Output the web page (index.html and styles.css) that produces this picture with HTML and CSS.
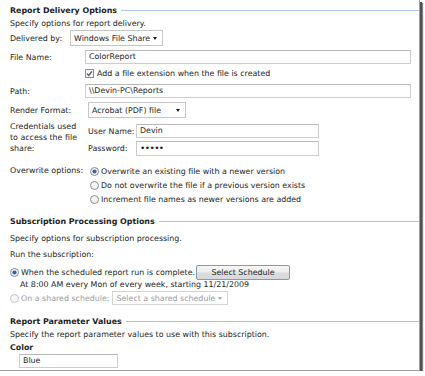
FILE: index.html
```html
<!DOCTYPE html>
<html lang="en">
<head>
    <meta charset="UTF-8">
    <title>Subscription Options</title>
    <link rel="stylesheet" href="styles.css">
</head>
<body>
    <div class="frame">
        <div class="heading first"><span>Report Delivery Options</span><span class="rule"></span></div>
        <p class="line desc-delivery">Specify options for report delivery.</p>

        <div class="row row-delivered">
            <span class="label w-delivered">Delivered by:</span>
            <div class="select select-share"><span>Windows File Share</span><span class="arrow"></span></div>
        </div>

        <div class="row row-field row-file">
            <span class="label w-field">File Name:</span>
            <div class="input input-path">ColorReport</div>
        </div>

        <div class="row row-check">
            <span class="label w-field"></span>
            <span class="checkbox">
                <svg width="9" height="9" viewBox="0 0 9 9"><rect x="0.5" y="0.5" width="8" height="8" fill="#f2f2f2" stroke="#8e8f8f"/><path d="M2 4.6 L3.7 6.4 L7 2.3" fill="none" stroke="#4b5a70" stroke-width="1.3"/></svg>
            </span>
            <span>Add a file extension when the file is created</span>
        </div>

        <div class="row row-field row-path">
            <span class="label w-field">Path:</span>
            <div class="input input-path">\\Devin-PC\Reports</div>
        </div>

        <div class="row row-render">
            <span class="label w-wide">Render Format:</span>
            <div class="select select-render"><span>Acrobat (PDF) file</span><span class="arrow"></span></div>
        </div>

        <div class="row row-cred">
            <span class="label w-wide cred-label"><span class="cred-text">Credentials used to access the file share:</span></span>
            <div class="cred-fields">
                <div class="cred-row">
                    <span class="cred-name">User Name:</span>
                    <div class="input input-cred">Devin</div>
                </div>
                <div class="cred-row">
                    <span class="cred-name">Password:</span>
                    <div class="input input-cred dots">&#8226;&#8226;&#8226;&#8226;&#8226;</div>
                </div>
            </div>
        </div>

        <div class="row row-overwrite">
            <span class="label w-over">Overwrite options:</span>
            <div class="options">
                <div class="option">
                    <svg class="radio" width="9" height="9" viewBox="0 0 9 9"><circle cx="4.5" cy="4.5" r="4" fill="#f4f4f4" stroke="#8c8c8c"/><circle cx="4.5" cy="4.5" r="2.1" fill="#2f64a8"/></svg>
                    <span>Overwrite an existing file with a newer version</span>
                </div>
                <div class="option">
                    <svg class="radio" width="9" height="9" viewBox="0 0 9 9"><circle cx="4.5" cy="4.5" r="4" fill="#f4f4f4" stroke="#8c8c8c"/></svg>
                    <span>Do not overwrite the file if a previous version exists</span>
                </div>
                <div class="option">
                    <svg class="radio" width="9" height="9" viewBox="0 0 9 9"><circle cx="4.5" cy="4.5" r="4" fill="#f4f4f4" stroke="#8c8c8c"/></svg>
                    <span>Increment file names as newer versions are added</span>
                </div>
            </div>
        </div>

        <div class="heading second"><span>Subscription Processing Options</span><span class="rule"></span></div>
        <p class="line desc-processing">Specify options for subscription processing.</p>
        <p class="line run-label">Run the subscription:</p>

        <div class="row row-when">
            <svg class="radio" width="9" height="9" viewBox="0 0 9 9"><circle cx="4.5" cy="4.5" r="4" fill="#f4f4f4" stroke="#8c8c8c"/><circle cx="4.5" cy="4.5" r="2.1" fill="#2f64a8"/></svg>
            <span>When the scheduled report run is complete.</span>
            <button type="button" class="btn">Select Schedule</button>
        </div>
        <p class="line schedule-info">At 8:00 AM every Mon of every week, starting 11/21/2009</p>

        <div class="row row-shared disabled">
            <svg class="radio" width="9" height="9" viewBox="0 0 9 9"><circle cx="4.5" cy="4.5" r="4" fill="#f7f7f7" stroke="#c4c4c4"/></svg>
            <span>On a shared schedule:</span>
            <div class="select select-shared"><span>Select a shared schedule</span><span class="arrow"></span></div>
        </div>

        <div class="heading third"><span>Report Parameter Values</span><span class="rule"></span></div>
        <p class="line desc-params">Specify the report parameter values to use with this subscription.</p>
        <p class="line param-name">Color</p>
        <div class="input input-param">Blue</div>
    </div>
</body>
</html>
```

FILE: styles.css
```css
body {
    margin: 0;
    background: #fff;
    font-family: "DejaVu Sans", Verdana, sans-serif;
    font-size: 7.9px;
    color: #252525;
}
.frame {
    width: 409px;
    height: 370px;
    padding-left: 10px;
    background: #fff;
    border-right: 1px solid #a0a0a0;
    border-bottom: 1px solid #a0a0a0;
    box-shadow: 2px 2px 0 #4f4f4f, 3px 3px 1px #808080;
    overflow: hidden;
}
.heading {
    display: flex;
    align-items: center;
    height: 14px;
    font-weight: bold;
    color: #1e1e1e;
}
.heading .rule {
    flex: 1;
    border-top: 1px solid #a9c2e1;
    margin-left: 4px;
}
.heading.first { margin-top: 3px; }
.heading.second { margin-top: 8px; }
.heading.third { margin-top: 9px; }
.line {
    margin: 0;
    height: 10px;
    line-height: 10px;
    white-space: nowrap;
}
.desc-delivery { margin-top: 2px; }
.desc-processing { margin-top: 6px; }
.run-label { margin-top: 6px; }
.schedule-info { padding-left: 10px; }
.desc-params { margin-top: 2px; }
.param-name { margin-top: 3px; font-weight: bold; }

.row {
    display: flex;
    align-items: center;
    white-space: nowrap;
}
.label { flex: none; }
.w-delivered { width: 60px; }
.w-field { width: 75px; }
.w-wide { width: 78px; }
.w-over { width: 80px; }

.row-delivered { margin-top: 1px; height: 16px; }
.row-file { margin-top: 4px; height: 14px; }
.row-check { margin-top: 4px; height: 10px; }
.row-path { margin-top: 6px; height: 14px; }
.row-render { margin-top: 4px; height: 16px; }
.row-cred { margin-top: 2px; align-items: flex-start; }
.row-overwrite { margin-top: 8px; align-items: flex-start; }
.row-overwrite .label { line-height: 14px; }
.row-when { margin-top: 5px; height: 15px; }
.row-shared { margin-top: 1px; height: 14px; }

.select {
    display: flex;
    align-items: center;
    box-sizing: border-box;
    height: 16px;
    padding: 0 5px 0 3px;
    border: 1px solid #c6c6c6;
    background: #fff;
}
.select .arrow {
    margin-left: auto;
    width: 0;
    height: 0;
    border-left: 2.5px solid transparent;
    border-right: 2.5px solid transparent;
    border-top: 3px solid #1c1c1c;
}
.select-share { width: 93px; }
.select-render { width: 98px; }
.select-shared {
    width: 116px;
    height: 14px;
    margin-left: 3px;
    border-color: #d4d4d4;
}
.select-shared .arrow { border-top-color: #a8a8a8; }

.input {
    box-sizing: border-box;
    height: 14px;
    line-height: 12px;
    padding-left: 3px;
    border: 1px solid #cdcdcd;
    border-top-color: #b9b9b9;
    background: #fff;
    white-space: nowrap;
}
.input-path { width: 326px; }
.input-cred { width: 183px; }
.input-param { width: 99px; margin-top: 1px; margin-left: 9px; }
.dots {
    font-size: 9px;
    letter-spacing: -0.6px;
    line-height: 12px;
}

.checkbox {
    display: flex;
    margin-right: 3px;
}
.cred-label {
    white-space: normal;
    line-height: 11px;
    padding-top: 0.5px;
}
.cred-text {
    display: block;
    width: 72px;
}
.cred-fields {
    padding-top: 4px;
    display: flex;
    flex-direction: column;
    gap: 3px;
}
.cred-row {
    display: flex;
    align-items: center;
}
.cred-name { width: 48px; }
.cred-row + .cred-row .input { height: 15px; }

.option {
    display: flex;
    align-items: center;
    height: 14px;
}
.radio {
    flex: none;
    margin-right: 2px;
}

.btn {
    box-sizing: border-box;
    width: 94px;
    height: 15px;
    margin-left: 1px;
    padding: 0;
    font-family: inherit;
    font-size: 7.9px;
    color: #1e1e1e;
    border: 1px solid #7f9bb8;
    border-radius: 2px;
    background: linear-gradient(#f7f7f7, #ececec 48%, #dcdcdc 52%, #d6d9dd);
}
.disabled { color: #9c9c9c; }
```
